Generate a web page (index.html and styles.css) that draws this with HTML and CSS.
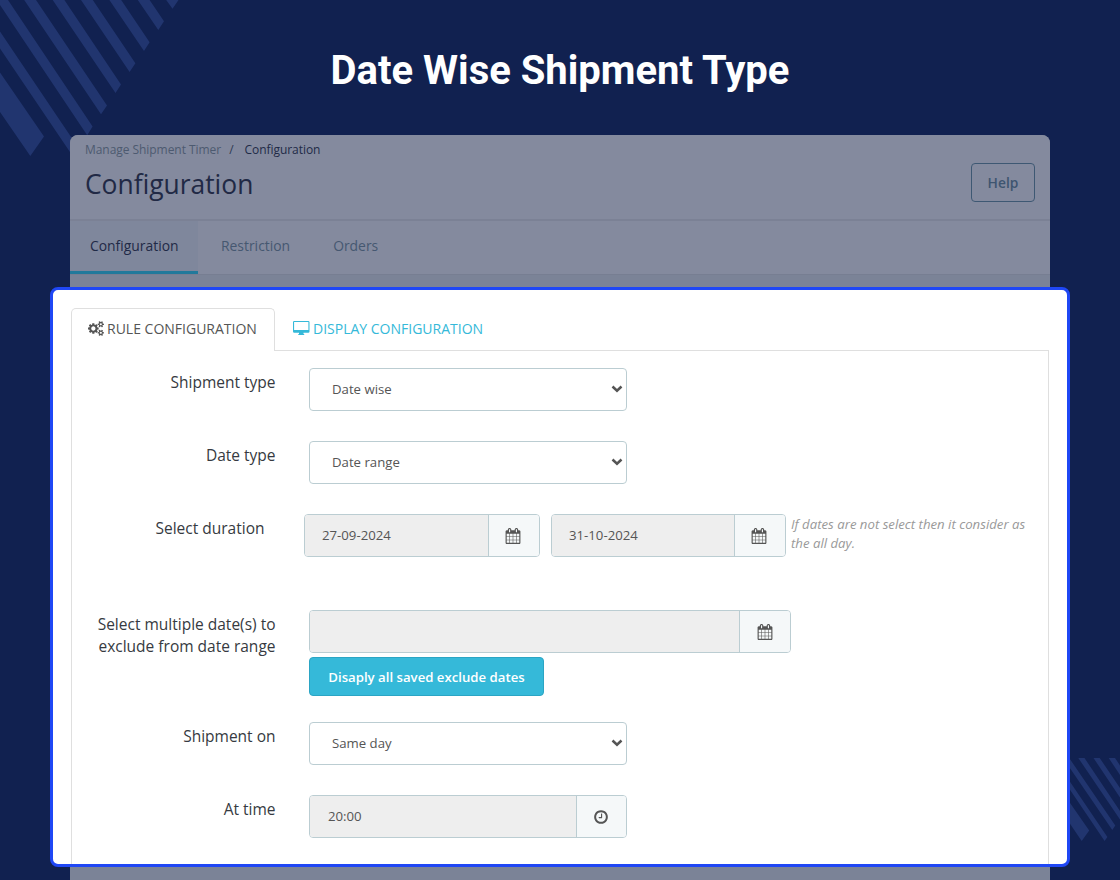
FILE: index.html
```html
<!DOCTYPE html>
<html lang="en">
<head>
    <meta charset="UTF-8">
    <meta name="viewport" content="width=device-width, initial-scale=1.0">
    <title>Date Wise Shipment Type</title>
    <link rel="stylesheet" href="styles.css">
</head>
<body>
    <!-- Background stripes -->
    <svg class="stripes stripes-top" width="180" height="160" viewBox="0 0 180 160">
        <path d="M0 72.5L44 136.5L30.3 156L0 112zM0 31.5L78.5 148L73 156.5L0 48.5zM0 0H8L92.6 126.6L87.2 135.3L0 5zM24.2 0H36L107 105.5L101 114.3zM52.7 0H64.4L121 84.5L115.5 93zM81 0H92.8L135.4 63.3L129.6 72zM109.4 0H121.2L149.6 42.3L144 51zM137.8 0H149.6L164 21.3L158.3 30zM166.2 0H178.5L172.5 8.8z"/>
    </svg>
    <svg class="stripes stripes-bottom" width="60" height="90" viewBox="1060 755 60 90">
        <path d="M1060 788.5L1089.2 830.5L1081.7 841L1060 809zM1060 767L1107.4 837L1104.6 841L1060 775zM1063 758H1069.2L1115.3 825.4L1112.3 830zM1078.3 758H1084.5L1120 811V819.5zM1093.5 758H1099.7L1120 788V797.5zM1108.7 758H1115L1120 765.4V775z"/>
    </svg>

    <!-- Icons -->
    <svg class="sprite">
        <symbol id="calendar" viewBox="0 0 1792 1792">
            <path d="M192 1664h288v-288h-288v288zm352 0h320v-288h-320v288zm-352-352h288v-320h-288v320zm352 0h320v-320h-320v320zm-352-384h288v-288h-288v288zm736 736h320v-288h-320v288zm-384-736h320v-288h-320v288zm768 736h288v-288h-288v288zm-384-352h320v-320h-320v320zm-352-864v-288q0-13-9.5-22.5t-22.5-9.5h-64q-13 0-22.5 9.5t-9.5 22.5v288q0 13 9.5 22.5t22.5 9.5h64q13 0 22.5-9.5t9.5-22.5zm736 864h288v-320h-288v320zm-384-384h320v-288h-320v288zm384 0h288v-288h-288v288zm32-480v-288q0-13-9.5-22.5t-22.5-9.5h-64q-13 0-22.5 9.5t-9.5 22.5v288q0 13 9.5 22.5t22.5 9.5h64q13 0 22.5-9.5t9.5-22.5zm384-64v1280q0 52-38 90t-90 38h-1408q-52 0-90-38t-38-90v-1280q0-52 38-90t90-38h128v-96q0-66 47-113t113-47h64q66 0 113 47t47 113v96h384v-96q0-66 47-113t113-47h64q66 0 113 47t47 113v96h128q52 0 90 38t38 90z"/>
        </symbol>
        <symbol id="clock" viewBox="0 0 1792 1792">
            <path d="M1024 544v448q0 14-9 23t-23 9h-320q-14 0-23-9t-9-23v-64q0-14 9-23t23-9h224v-352q0-14 9-23t23-9h64q14 0 23 9t9 23zm416 352q0-148-73-273t-198-198-273-73-273 73-198 198-73 273 73 273 198 198 273 73 273-73 198-198 73-273zm224 0q0 209-103 385.5t-279.5 279.5-385.5 103-385.5-103-279.5-279.5-103-385.5 103-385.5 279.5-279.5 385.5-103 385.5 103 279.5 279.5 103 385.5z"/>
        </symbol>
        <symbol id="cogs" viewBox="-64 0 1920 1792">
            <path d="M832 896q0-106-75-181t-181-75-181 75-75 181 75 181 181 75 181-75 75-181zm768 512q0-52-38-90t-90-38-90 38-38 90q0 53 37.5 90.5t90.5 37.5 90.5-37.5 37.5-90.5zm0-1024q0-52-38-90t-90-38-90 38-38 90q0 53 37.5 90.5t90.5 37.5 90.5-37.5 37.5-90.5zm-384 421v185q0 10-7 19.5t-16 10.5l-155 24q-11 35-32 76 34 48 90 115 7 11 7 20 0 12-7 19-23 30-82.5 89.5t-78.5 59.5q-11 0-21-7l-115-90q-37 19-77 31-11 108-23 155-7 24-30 24h-186q-11 0-20-7.5t-10-17.5l-23-153q-34-10-75-31l-118 89q-7 7-20 7-11 0-21-8-144-133-144-160 0-9 7-19 10-14 41-53t47-61q-23-44-35-82l-152-24q-10-1-17-9.5t-7-19.5v-185q0-10 7-19.5t16-10.5l155-24q11-35 32-76-34-48-90-115-7-11-7-20 0-12 7-20 22-30 82-89t79-59q11 0 21 7l115 90q34-18 77-32 11-108 23-154 7-24 30-24h186q11 0 20 7.5t10 17.5l23 153q34 10 75 31l118-89q8-7 20-7 11 0 21 8 144 133 144 160 0 8-7 19-12 16-42 54t-45 60q23 48 34 82l152 23q10 2 17 10.5t7 19.5zm640 533v140q0 16-149 31-12 27-30 52 51 113 51 138 0 4-4 7-122 71-124 71-8 0-46-47t-52-68q-20 2-30 2t-30-2q-14 21-52 68t-46 47q-2 0-124-71-4-3-4-7 0-25 51-138-18-25-30-52-149-15-149-31v-140q0-16 149-31 13-29 30-52-51-113-51-138 0-4 4-7 4-2 35-20t59-34 30-16q8 0 46 46.5t52 67.5q20-2 30-2t30 2q51-71 92-112l6-2q4 0 124 70 4 3 4 7 0 25-51 138 17 23 30 52 149 15 149 31zm0-1024v140q0 16-149 31-12 27-30 52 51 113 51 138 0 4-4 7-122 71-124 71-8 0-46-47t-52-68q-20 2-30 2t-30-2q-14 21-52 68t-46 47q-2 0-124-71-4-3-4-7 0-25 51-138-18-25-30-52-149-15-149-31v-140q0-16 149-31 13-29 30-52-51-113-51-138 0-4 4-7 4-2 35-20t59-34 30-16q8 0 46 46.5t52 67.5q20-2 30-2t30 2q51-71 92-112l6-2q4 0 124 70 4 3 4 7 0 25-51 138 17 23 30 52 149 15 149 31z"/>
        </symbol>
        <symbol id="desktop" viewBox="0 0 17 15">
            <path fill-rule="evenodd" d="M1.2 0H15.3Q16.5 0 16.5 1.2V10.6Q16.5 11.8 15.3 11.8H10.5V13H11.2V14H5.3V13H6V11.8H1.2Q0 11.8 0 10.6V1.2Q0 0 1.2 0zM1.1 1.1V8.9H15.4V1.1z"/>
        </symbol>
    </svg>

    <h1 class="page-title">Date Wise Shipment Type</h1>

    <div class="panel">
        <div class="panel-header">
            <div>
                <div class="breadcrumb"><span>Manage Shipment Timer</span><span class="slash">/</span><span class="current">Configuration</span></div>
                <h2>Configuration</h2>
            </div>
            <button class="help">Help</button>
        </div>
        <div class="panel-tabs">
            <a class="panel-tab active">Configuration</a>
            <a class="panel-tab">Restriction</a>
            <a class="panel-tab">Orders</a>
        </div>
    </div>

    <div class="card">
        <div class="tabs">
            <a class="tab active"><svg width="16" height="15"><use href="#cogs"/></svg>RULE CONFIGURATION</a>
            <a class="tab"><svg width="17" height="15"><use href="#desktop"/></svg>DISPLAY CONFIGURATION</a>
        </div>
        <div class="form">
            <div class="row">
                <label>Shipment type</label>
                <select><option>Date wise</option></select>
            </div>
            <div class="row">
                <label>Date type</label>
                <select><option>Date range</option></select>
            </div>
            <div class="row duration">
                <label>Select duration</label>
                <div class="dates">
                    <div class="input-group">
                        <input type="text" value="27-09-2024" readonly>
                        <span class="addon"><svg width="16" height="16"><use href="#calendar"/></svg></span>
                    </div>
                    <div class="input-group">
                        <input type="text" value="31-10-2024" readonly>
                        <span class="addon"><svg width="16" height="16"><use href="#calendar"/></svg></span>
                    </div>
                    <p class="hint">If dates are not select then it consider as the all day.</p>
                </div>
            </div>
            <div class="row exclude">
                <label>Select multiple date(s) to exclude from date range</label>
                <div>
                    <div class="input-group wide">
                        <input type="text" readonly>
                        <span class="addon"><svg width="16" height="16"><use href="#calendar"/></svg></span>
                    </div>
                    <button class="show-dates">Disaply all saved exclude dates</button>
                </div>
            </div>
            <div class="row">
                <label>Shipment on</label>
                <select><option>Same day</option></select>
            </div>
            <div class="row">
                <label>At time</label>
                <div class="input-group time">
                    <input type="text" value="20:00" readonly>
                    <span class="addon"><svg width="16" height="16"><use href="#clock"/></svg></span>
                </div>
            </div>
        </div>
    </div>

    <div class="panel-bottom"></div>
</body>
</html>
```
FILE: styles.css
```css
* {
    box-sizing: border-box;
}

body {
    margin: 0;
    height: 880px;
    overflow: hidden;
    display: flex;
    flex-direction: column;
    align-items: center;
    background-color: #112150;
    font-family: "Open Sans", sans-serif;
    color: #363a41;
}

/* Background stripes */
.stripes {
    position: absolute;
    z-index: -1;
    fill: #21356f;
}

.stripes-top {
    top: 0;
    left: 0;
}

.stripes-bottom {
    top: 755px;
    right: 0;
}

.sprite {
    display: none;
}

.page-title {
    margin: 0;
    height: 135px;
    padding-top: 47px;
    font-family: Roboto, sans-serif;
    font-size: 40px;
    line-height: 47px;
    font-weight: bold;
    color: #fff;
}

/* Dimmed page behind the card */
.panel {
    width: 980px;
    height: 152px;
    flex-shrink: 0;
    border-radius: 8px 8px 0 0;
    background-color: #7b8397;
    overflow: hidden;
}

.panel-header {
    display: flex;
    justify-content: space-between;
    height: 86px;
    padding: 0 15px;
    background-color: #848a9e;
    border-bottom: 2px solid #7b8195;
}

.breadcrumb {
    padding-top: 6px;
    font-size: 12px;
    line-height: 18px;
    letter-spacing: -0.05px;
    color: #4d5a70;
}

.breadcrumb .slash {
    margin: 0 11px 0 8px;
    color: #2f3a52;
}

.breadcrumb .current {
    color: #1f2a47;
}

.panel h2 {
    margin: 7px 0 0;
    font-size: 26.4px;
    line-height: 37px;
    font-weight: normal;
    color: #212945;
}

.help {
    width: 64px;
    height: 39px;
    margin-top: 28px;
    padding: 0;
    border: 1px solid #3e5873;
    border-radius: 4px;
    background: none;
    font: 600 13.8px "Open Sans", sans-serif;
    color: #3e5570;
}

.panel-tabs {
    display: flex;
    height: 54px;
    background-color: #848a9e;
    border-bottom: 1px solid #777e92;
}

.panel-tab {
    height: 53px;
    padding: 15px 23px 0;
    font-size: 13.9px;
    line-height: 20px;
    color: #465871;
}

.panel-tab + .panel-tab + .panel-tab {
    padding-left: 20px;
}

.panel-tab.active {
    width: 128px;
    padding: 15px 0 0 20px;
    background-color: #7f879c;
    border-bottom: 3px solid #22799b;
    color: #1f2a47;
}

.panel-bottom {
    width: 980px;
    height: 13px;
    background-color: #7b8397;
}

/* Card */
.card {
    display: flex;
    flex-direction: column;
    flex-shrink: 0;
    width: 1020px;
    height: 580px;
    padding: 18px 18px 0;
    border: 3px solid #1f47f5;
    border-radius: 8px;
    background-color: #fff;
    overflow: hidden;
}

.tabs {
    display: flex;
    height: 42px;
}

.tab {
    display: flex;
    align-items: center;
    gap: 3px;
    height: 42px;
    padding: 0 18px 1px;
    font-size: 14px;
    color: #35b9d9;
}

.tab svg {
    fill: currentColor;
}

.tab.active {
    position: relative;
    width: 204px;
    height: 43px;
    padding: 0 0 3px 16px;
    border: 1px solid #dfdfdf;
    border-bottom: none;
    border-radius: 5px 5px 0 0;
    background-color: #fff;
    color: #555;
}

.form {
    flex: 1;
    padding: 17px 0 0;
    border: 1px solid #dfdfdf;
    border-bottom: none;
}

.row {
    display: grid;
    grid-template-columns: 203.5px 1fr;
    column-gap: 33.5px;
    margin-bottom: 30px;
}

.row label {
    padding-top: 3px;
    text-align: right;
    font-size: 15.5px;
    line-height: 22px;
}

select {
    appearance: none;
    width: 318px;
    height: 43px;
    padding: 0 0 2px 22px;
    border: 1px solid #bbcdd2;
    border-radius: 4px;
    background: #fff url("data:image/svg+xml,%3Csvg xmlns='http://www.w3.org/2000/svg' width='12' height='8'%3E%3Cpath d='M1.5 1.5L6 5.7L10.5 1.5' fill='none' stroke='%23555' stroke-width='2.5'/%3E%3C/svg%3E") no-repeat right 3px top 16px;
    font: 13.2px "Open Sans", sans-serif;
    color: #555;
}

.input-group {
    display: flex;
    width: 236px;
    height: 43px;
    border: 1px solid #bbcdd2;
    border-radius: 4px;
    overflow: hidden;
}

.input-group input {
    flex: 1;
    min-width: 0;
    padding: 0 17px 2px;
    border: none;
    background-color: #eee;
    font: 13.2px "Open Sans", sans-serif;
    color: #555;
}

.addon {
    display: flex;
    align-items: center;
    justify-content: center;
    width: 51px;
    padding-right: 2px;
    border-left: 1px solid #bbcdd2;
    background-color: #f5f8f9;
}

.addon svg {
    fill: #555;
}

.wide {
    width: 482px;
}

.wide .addon {
    padding: 0;
}

.time {
    width: 318px;
}

.time input {
    padding-left: 18px;
}

.time .addon {
    width: 50px;
    padding: 0 1px 0 0;
}

.duration {
    grid-template-columns: 192.5px 1fr;
    column-gap: 39.5px;
    margin-bottom: 53px;
}

.dates {
    display: flex;
    gap: 11px;
}

.dates .input-group {
    flex-shrink: 0;
}

.dates .input-group + .input-group {
    width: 235px;
}

.hint {
    margin: 1px 0 0 -6px;
    width: 242px;
    font-size: 13.2px;
    line-height: 19px;
    font-style: italic;
    color: #999;
}

.exclude {
    margin-bottom: 26px;
}

.exclude label {
    padding-left: 20px;
}

.show-dates {
    display: block;
    width: 235px;
    height: 39px;
    margin-top: 4px;
    padding: 0;
    border: 1px solid #2ba5c4;
    border-radius: 4px;
    background-color: #35b9d9;
    font: 600 13.2px "Open Sans", sans-serif;
    color: #fff;
}
```
